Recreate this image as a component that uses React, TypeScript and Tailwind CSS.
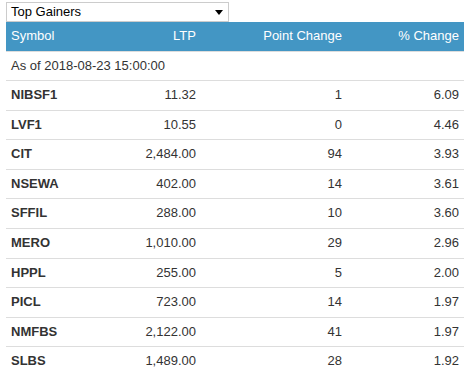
import React from "react";

interface Gainer {
  symbol: string;
  ltp: string;
  pointChange: string;
  percentChange: string;
}

const GAINERS: Gainer[] = [
  { symbol: "NIBSF1", ltp: "11.32", pointChange: "1", percentChange: "6.09" },
  { symbol: "LVF1", ltp: "10.55", pointChange: "0", percentChange: "4.46" },
  { symbol: "CIT", ltp: "2,484.00", pointChange: "94", percentChange: "3.93" },
  { symbol: "NSEWA", ltp: "402.00", pointChange: "14", percentChange: "3.61" },
  { symbol: "SFFIL", ltp: "288.00", pointChange: "10", percentChange: "3.60" },
  { symbol: "MERO", ltp: "1,010.00", pointChange: "29", percentChange: "2.96" },
  { symbol: "HPPL", ltp: "255.00", pointChange: "5", percentChange: "2.00" },
  { symbol: "PICL", ltp: "723.00", pointChange: "14", percentChange: "1.97" },
  { symbol: "NMFBS", ltp: "2,122.00", pointChange: "41", percentChange: "1.97" },
  { symbol: "SLBS", ltp: "1,489.00", pointChange: "28", percentChange: "1.92" },
];

const cols = "grid grid-cols-[120px_75px_146px_117px]";
const cell = "px-[5px] py-[5px] leading-[18.57px]";

export default function App() {
  return (
    <div className="min-h-screen bg-white pl-[6px] pt-[2px] font-['Liberation_Sans',Arial,sans-serif] text-[13px] text-[#333]">
      {/* Market selector */}
      <div className="flex h-[20px] w-[223px] items-center justify-between border border-[#ccc] bg-white pl-[4px] pr-[5px] text-[13px] text-black">
        <span>Top Gainers</span>
        <svg width="8" height="5" viewBox="0 0 8 5">
          <path d="M0 0h8L4 5z" fill="#000" />
        </svg>
      </div>

      <div className="w-[458px]">
        {/* Header */}
        <div className={`${cols} bg-[#4396c4] text-white`}>
          <div className={cell}>Symbol</div>
          <div className={`${cell} text-right`}>LTP</div>
          <div className={`${cell} text-right`}>Point Change</div>
          <div className={`${cell} text-right`}>% Change</div>
        </div>

        <div className={`border-t border-[#ddd] ${cell}`}>As of 2018-08-23 15:00:00</div>

        {GAINERS.map((g) => (
          <div key={g.symbol} className={`${cols} border-t border-[#ddd]`}>
            <div className={`${cell} font-bold`}>{g.symbol}</div>
            <div className={`${cell} text-right`}>{g.ltp}</div>
            <div className={`${cell} text-right`}>{g.pointChange}</div>
            <div className={`${cell} text-right`}>{g.percentChange}</div>
          </div>
        ))}
      </div>
    </div>
  );
}
